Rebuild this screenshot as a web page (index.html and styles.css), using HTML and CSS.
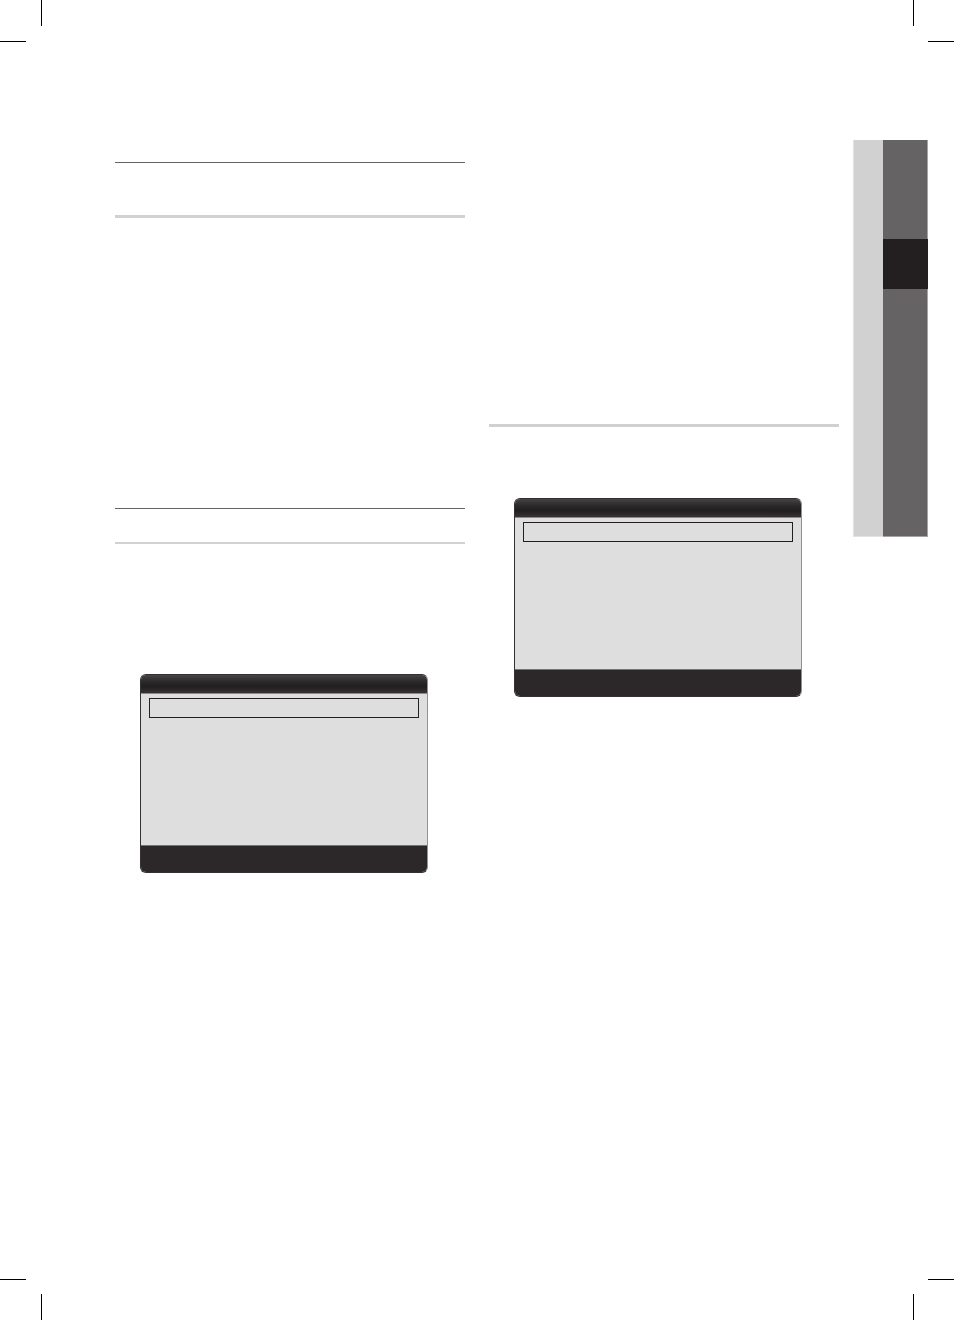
FILE: index.html
```html
<!DOCTYPE html>
<html lang="en">
<head>
<meta charset="utf-8">
<title>Manual page</title>
<link rel="stylesheet" href="styles.css">
</head>
<body>
<div class="sheet">
  <div class="marks">
    <svg class="mark" viewBox="0 0 42 42" aria-hidden="true"><path d="M41 0h1v26h-1zM0 41h26v1H0z"/></svg>
    <svg class="mark" viewBox="0 0 42 42" aria-hidden="true"><path d="M1 0h1v26H1zM16 41h26v1H16z"/></svg>
  </div>
  <main class="page">
    <div class="columns">
      <section class="column">
        <div class="heading heading-large"></div>
        <div class="copy copy-long"></div>
        <div class="heading heading-small"></div>
        <div class="copy copy-short"></div>
        <div class="screen">
          <div class="screen-title"></div>
          <div class="screen-body"><div class="selected-row"></div></div>
          <div class="screen-footer"></div>
        </div>
      </section>
      <section class="column">
        <div class="copy copy-full"></div>
        <div class="rule"></div>
        <div class="copy copy-intro"></div>
        <div class="screen">
          <div class="screen-title"></div>
          <div class="screen-body"><div class="selected-row"></div></div>
          <div class="screen-footer"></div>
        </div>
      </section>
    </div>
    <aside class="chapter-tab">
      <div class="tab-label"></div>
      <div class="tab-index"><div class="tab-current"></div></div>
    </aside>
  </main>
  <div class="marks">
    <svg class="mark" viewBox="0 0 42 42" aria-hidden="true"><path d="M41 16h1v26h-1zM0 1h26v1H0z"/></svg>
    <svg class="mark" viewBox="0 0 42 42" aria-hidden="true"><path d="M1 16h1v26H1zM16 1h26v1H16z"/></svg>
  </div>
</div>
</body>
</html>
```
FILE: styles.css
```css
* {
  box-sizing: border-box;
}

body {
  margin: 0;
  background: #fff;
  font-family: "Liberation Sans", Arial, sans-serif;
}

.sheet {
  display: flex;
  flex-direction: column;
  min-height: 100vh;
}

.marks {
  display: flex;
  justify-content: space-between;
}

.mark {
  display: block;
  width: 42px;
  height: 42px;
  fill: #000;
}

.page {
  flex: 1;
  display: flex;
  align-items: flex-start;
  gap: 14px;
  padding: 98px 26px 0 115px;
}

.columns {
  flex: 1;
  display: grid;
  grid-template-columns: 1fr 1fr;
  gap: 24px;
}

.heading {
  border-top: 1px solid #656364;
  border-bottom: 3px solid #d1d1d1;
}

.heading-large {
  height: 56px;
  margin-top: 22px;
}

.heading-small {
  height: 36px;
  border-bottom-width: 2px;
}

.rule {
  height: 3px;
  background: #d1d1d1;
}

.copy-long {
  height: 290px;
}

.copy-short {
  height: 130px;
}

.copy-full {
  height: 284px;
}

.copy-intro {
  height: 71px;
}

.screen {
  margin: 0 37px 0 25px;
  border: 1px solid #343132;
  border-right-color: #929091;
  border-radius: 6px;
  background: #dedede;
  overflow: hidden;
}

.screen-title {
  height: 19px;
  background: linear-gradient(#464445, #2d2a2b 35%, #211e1f 65%, #373334);
  border-bottom: 1px solid #8d898a;
}

.screen-body {
  height: 151px;
  padding: 4px 8px;
}

.selected-row {
  height: 20px;
  border: 1px solid #231f20;
}

.screen-footer {
  height: 27px;
  border-top: 1px solid #777475;
  background: #2c2829;
}

.chapter-tab {
  display: grid;
  grid-template-columns: 30px 45px;
  height: 397px;
}

.tab-label {
  background: #d1d1d1;
  border: solid #e2e2e2;
  border-width: 0 0 1px 1px;
}

.tab-index {
  padding-top: 99px;
  background: linear-gradient(#656364, #656364) no-repeat 0 0 / calc(100% - 1px) calc(100% - 1px) #a5a3a4;
}

.tab-current {
  height: 50px;
  background: #231f20;
}
```
